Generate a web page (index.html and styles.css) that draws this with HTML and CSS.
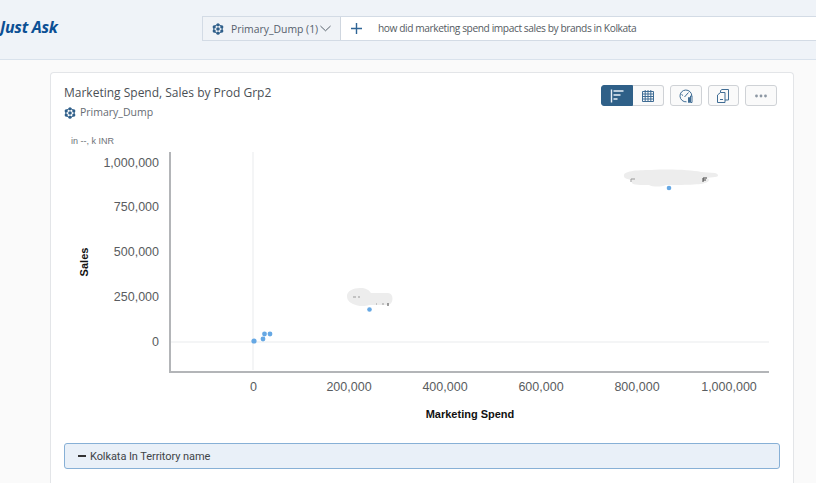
FILE: index.html
```html
<!DOCTYPE html>
<html lang="en">
<head>
<meta charset="utf-8">
<title>Just Ask</title>
<link rel="stylesheet" href="styles.css">
</head>
<body>
<header class="top">
  <div class="brand">Just Ask</div>
  <div class="search">
    <div class="model">
      <svg class="cube" viewBox="0 0 12 12"><path class="cube-line" d="M6 1.200l4.200 2.400v4.800L6 10.800 1.800 8.400V3.600z"/><circle class="cube-dot" cx="6" cy="1.800" r="1.600"/><circle class="cube-dot" cx="6" cy="10.200" r="1.600"/><circle class="cube-dot" cx="2.200" cy="3.900" r="1.600"/><circle class="cube-dot" cx="9.800" cy="3.900" r="1.600"/><circle class="cube-dot" cx="2.200" cy="8.100" r="1.600"/><circle class="cube-dot" cx="9.800" cy="8.100" r="1.600"/><circle class="cube-dot" cx="6" cy="6" r="1.800"/></svg>
      <span class="model-name">Primary_Dump (1)</span>
      <svg class="chev" viewBox="0 0 12 7"><path d="M.5 .8L6 6 11.500 .8"/></svg>
    </div>
    <div class="plus"><svg viewBox="0 0 11 11"><path d="M5.500 0v11M0 5.500h11"/></svg></div>
    <div class="query">how did marketing spend impact sales by brands in Kolkata</div>
  </div>
</header>
<main class="page">
  <section class="card">
    <div class="card-head">
      <div>
        <h1 class="card-title">Marketing Spend, Sales by Prod Grp2</h1>
        <div class="source">
          <svg class="cube" viewBox="0 0 12 12"><path class="cube-line" d="M6 1.200l4.200 2.400v4.800L6 10.800 1.800 8.400V3.600z"/><circle class="cube-dot" cx="6" cy="1.800" r="1.600"/><circle class="cube-dot" cx="6" cy="10.200" r="1.600"/><circle class="cube-dot" cx="2.200" cy="3.900" r="1.600"/><circle class="cube-dot" cx="9.800" cy="3.900" r="1.600"/><circle class="cube-dot" cx="2.200" cy="8.100" r="1.600"/><circle class="cube-dot" cx="9.800" cy="8.100" r="1.600"/><circle class="cube-dot" cx="6" cy="6" r="1.800"/></svg>
          <span>Primary_Dump</span>
        </div>
      </div>
      <div class="tools">
        <div class="seg">
          <button class="tool active"><svg viewBox="0 0 14 14"><path d="M1.500 .5v13M3.500 2h10M3.500 6h7M3.500 10h4"/></svg></button>
          <button class="tool"><svg viewBox="0 0 14 14"><path d="M1.500 2.500h11v10h-11zM1.500 5h11M1.500 7.500h11M1.500 10h11M4.200 1v11.500M7 1v11.500M9.800 1v11.500"/></svg></button>
        </div>
        <button class="tool solo"><svg viewBox="0 0 14 14"><path d="M7.500 12.800A5.900 5.900 0 1 1 12.800 7M5.500 8L9.500 3.500M2.500 5.500L4 6.500"/><path d="M9.500 8.500h1v5h-1zM11.500 7h1.500v6.500h-1.500z"/></svg></button>
        <button class="tool solo"><svg viewBox="0 0 14 14"><path d="M1.500 6L4.500 3.500h4.500v10h-7.500zM4.500 3.500V1.500L6 .5h6.500v10.500H9M4 10.500h3"/></svg></button>
        <button class="tool solo dots"><svg viewBox="0 0 14 4"><circle cx="2.500" cy="2" r="1.400"/><circle cx="7" cy="2" r="1.400"/><circle cx="11.500" cy="2" r="1.400"/></svg></button>
      </div>
    </div>
    <div class="unit">in --, k INR</div>
    <svg class="chart" viewBox="0 0 742 296" width="742" height="296">
      <line class="grid" x1="202" y1="8" x2="202" y2="226"/>
      <line class="grid" x1="119" y1="198" x2="718" y2="198"/>
      <path class="axis" d="M119 8V228H718"/>
      <g class="tick-y">
        <text x="108" y="23">1,000,000</text>
        <text x="108" y="67">750,000</text>
        <text x="108" y="112">500,000</text>
        <text x="108" y="157">250,000</text>
        <text x="108" y="202">0</text>
      </g>
      <g class="tick-x">
        <text x="202.500" y="247">0</text>
        <text x="298" y="247">200,000</text>
        <text x="394" y="247">400,000</text>
        <text x="490" y="247">600,000</text>
        <text x="586" y="247">800,000</text>
        <text x="678" y="247">1,000,000</text>
      </g>
      <text class="axis-title" x="419" y="274">Marketing Spend</text>
      <text class="axis-title" transform="translate(37 118) rotate(-90)">Sales</text>
      <g class="blob">
        <path d="M573 32C572 27 585 26 600 26C620 25 640 26 650 28L664 29C668 30 668 33 664 33L655 34C660 35 658 38 654 39C650 41 625 41 615 41C610 43 602 43 598 41C590 41 582 41 581 39C580 37 581 36 581 36C577 35 573 35 573 32Z"/>
        <path d="M296 152C296 147 302 144 309 144C315 144 318 146 320 149H337C343 149 343 160 337 161H318C313 163 306 162 302 160C298 158 296 156 296 152Z"/>
      </g>
      <g class="redact">
        <path class="faint" d="M580 35h4M580 35v3M302 153h3M307 153h2M325 160h1M331 160h2"/>
        <path d="M652 38v-4h4M652 36h3M337 159v3"/>
      </g>
      <g class="dots-pts">
        <circle cx="203" cy="197" r="2.600"/>
        <circle cx="212" cy="195" r="2.400"/>
        <circle cx="213.500" cy="190" r="2.400"/>
        <circle cx="219" cy="190" r="2.400"/>
        <circle cx="318.500" cy="165.500" r="2.300"/>
        <circle cx="618" cy="44" r="2.300"/>
      </g>
    </svg>
    <div class="panel"><span class="dash"></span><span>Kolkata In Territory name</span></div>
  </section>
</main>
</body>
</html>
```
FILE: styles.css
```css
html, body { margin: 0; padding: 0; }
body {
  width: 816px;
  height: 483px;
  overflow: hidden;
  background: #fafafa;
  font-family: "Open Sans", "Noto Sans", sans-serif;
  color: #4a4f55;
}
svg { display: block; }

.top {
  height: 59px;
  background: #eff3f8;
  border-bottom: 1px solid #d9e2ec;
  display: flex;
  align-items: flex-start;
}
.brand {
  width: 202px;
  flex: none;
  padding-top: 18px;
  font: italic bold 16px/18px "Open Sans", sans-serif;
  color: #0b4f94;
  letter-spacing: -0.3px;
}
.search {
  margin-top: 16px;
  flex: 1;
  height: 25px;
  display: flex;
  align-items: center;
  background: #fff;
  border: 1px solid #d3dbe5;
  border-right: 0;
  box-sizing: border-box;
}
.model {
  width: 138px;
  height: 100%;
  flex: none;
  display: flex;
  align-items: center;
  box-sizing: border-box;
  padding-left: 9px;
  background: #f0f3f7;
  border-right: 1px solid #cfd6df;
  font-size: 10.400px;
  color: #56606c;
}
.cube { width: 12px; height: 12px; flex: none; }
.cube-dot { fill: #2f5f8a; }
.cube-line { stroke: #2f5f8a; stroke-width: 1; fill: none; }
.model-name { margin-left: 7px; white-space: nowrap; }
.chev { width: 11px; height: 7px; margin-left: 2px; flex: none; }
.chev path { fill: none; stroke: #4a5560; stroke-width: 1; }
.plus { width: 30px; flex: none; display: flex; justify-content: center; margin-right: 7px; }
.plus svg { width: 11px; height: 11px; }
.plus path { stroke: #2f6596; stroke-width: 1.400; fill: none; }
.query {
  margin-top: -1px;
  font-size: 10.200px;
  color: #555b62;
  letter-spacing: -0.41px;
  white-space: nowrap;
}

.page { padding: 12px 0 0 50px; }
.card {
  width: 744px;
  height: 411px;
  background: #fff;
  border: 1px solid #e3e5e8;
  border-bottom: 0;
  border-radius: 4px 4px 0 0;
  box-sizing: border-box;
}
.card-head {
  display: flex;
  justify-content: space-between;
  align-items: flex-start;
  padding: 12px 16.500px 0 13px;
}
.card-title {
  margin: 0;
  font-size: 12px;
  line-height: 16px;
  font-weight: 400;
  color: #4a4f55;
  white-space: nowrap;
}
.source {
  display: flex;
  align-items: center;
  gap: 4px;
  margin-top: 4px;
  font-size: 10.500px;
  line-height: 15px;
  color: #666c73;
}
.tools { display: flex; gap: 6px; }
.seg { display: flex; }
.tool {
  width: 31.500px;
  height: 21px;
  padding: 0;
  background: #fafafa;
  border: 1px solid #cfd2d6;
  border-radius: 3px;
  display: flex;
  align-items: center;
  justify-content: center;
}
.tool svg { width: 14px; height: 14px; }
.tool path { fill: none; stroke: #3f6c94; stroke-width: 1; }
.seg .tool:first-child { border-radius: 3px 0 0 3px; }
.seg .tool:last-child { border-radius: 0 3px 3px 0; border-left: 0; }
.tool.active { background: #2f6088; border-color: #2f6088; }
.tool.active path { stroke: #e8f0f7; stroke-width: 1.400; }
.tool.dots svg { width: 14px; height: 4px; }
.dots circle { fill: #8c97a3; }

.unit {
  margin: 15px 0 0 20px;
  font: 9px/12px "Liberation Sans", Arial, sans-serif;
  color: #6d7278;
}
.chart { margin-top: -3px; }
.grid { stroke: #e9ebed; stroke-width: 1; }
.axis { fill: none; stroke: #b3b5b8; stroke-width: 2; }
.tick-y text, .tick-x text {
  font: 12.500px "Liberation Sans", Arial, sans-serif;
  fill: #595c60;
}
.tick-y text { text-anchor: end; }
.tick-x text { text-anchor: middle; }
.axis-title {
  font: bold 11px "Liberation Sans", Arial, sans-serif;
  fill: #111;
  text-anchor: middle;
}
.blob path { fill: #ededed; }
.redact path { fill: none; stroke: #444; stroke-width: 1; }
.redact .faint { stroke: #999; }
.dots-pts circle { fill: #66a8e4; }

.panel {
  width: 716px;
  height: 26px;
  margin: 3px 0 0 13px;
  box-sizing: border-box;
  background: #e9f0f8;
  border: 1px solid #87b0d6;
  border-radius: 3px;
  display: flex;
  align-items: center;
  gap: 4px;
  padding-left: 13px;
  font: 11px Roboto, sans-serif;
  letter-spacing: -0.08px;
  color: #3f4448;
}
.dash { width: 8px; height: 2px; background: #333; flex: none; }
```
